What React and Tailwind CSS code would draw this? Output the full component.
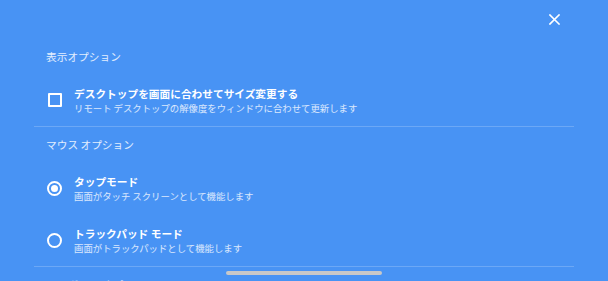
const SECTIONS = [
  {
    title: '表示オプション',
    items: [
      {
        kind: 'checkbox',
        label: 'デスクトップを画面に合わせてサイズ変更する',
        sub: 'リモート デスクトップの解像度をウィンドウに合わせて更新します',
      },
    ],
  },
  {
    title: 'マウス オプション',
    items: [
      { kind: 'radio', checked: true, label: 'タップモード', sub: '画面がタッチ スクリーンとして機能します' },
      { kind: 'radio', checked: false, label: 'トラックパッド モード', sub: '画面がトラックパッドとして機能します' },
    ],
  },
  { title: 'キーボード オプション', items: [] },
]

function Control({ kind, checked }) {
  if (kind === 'checkbox') {
    return <div className="w-[14px] h-[14px] border-2 border-white rounded-[1px]" />
  }
  return (
    <div className="w-[15px] h-[15px] rounded-full border-2 border-white flex items-center justify-center">
      {checked && <div className="w-[7px] h-[7px] rounded-full bg-white" />}
    </div>
  )
}

function Row({ item }) {
  return (
    <div className="h-[52px] flex items-center pl-[13px]">
      <div className="w-[15px] flex justify-center">
        <Control kind={item.kind} checked={item.checked} />
      </div>
      <div className="ml-[12px] flex flex-col pt-[1px]">
        <span className="text-[10.7px] leading-[14px] font-bold text-white">{item.label}</span>
        <span className="text-[9.4px] leading-[14px] text-white/80">{item.sub}</span>
      </div>
    </div>
  )
}

export default function App() {
  return (
    <div className="relative w-[608px] h-[281px] overflow-hidden bg-[#4893f4] font-['Noto_Sans_CJK_JP','Noto_Sans',sans-serif]">
      {/* close */}
      <div className="h-[39px] flex items-center justify-end pr-[48px]">
        <svg width="11" height="11" viewBox="0 0 11 11">
          <path d="M1 1L10 10M10 1L1 10" stroke="white" strokeWidth="1.6" strokeLinecap="square" />
        </svg>
      </div>

      <div className="mx-[34px]">
        {SECTIONS.map((s, i) => (
          <div key={s.title}>
            {i > 0 && <div className="h-px bg-white/20" />}
            <div className="h-[35px] flex items-center pl-[12px] pt-[2px] text-[10.7px] text-white/85">
              {s.title}
            </div>
            {s.items.map((it) => (
              <Row key={it.label} item={it} />
            ))}
          </div>
        ))}
      </div>

      {/* home indicator */}
      <div className="absolute left-[226px] top-[271px] w-[156px] h-[4px] rounded-full bg-[#c8c8c8]" />
    </div>
  )
}
